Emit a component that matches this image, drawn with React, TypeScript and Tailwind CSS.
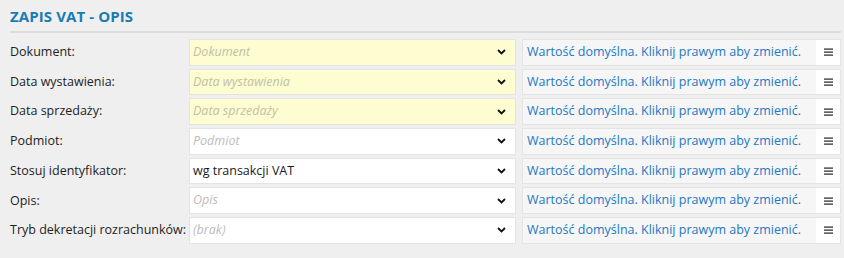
const rows: { label: string; value: string; placeholder: boolean; yellow: boolean }[] = [
  { label: 'Dokument:', value: 'Dokument', placeholder: true, yellow: true },
  { label: 'Data wystawienia:', value: 'Data wystawienia', placeholder: true, yellow: true },
  { label: 'Data sprzedaży:', value: 'Data sprzedaży', placeholder: true, yellow: true },
  { label: 'Podmiot:', value: 'Podmiot', placeholder: true, yellow: false },
  { label: 'Stosuj identyfikator:', value: 'wg transakcji VAT', placeholder: false, yellow: false },
  { label: 'Opis:', value: 'Opis', placeholder: true, yellow: false },
  { label: 'Tryb dekretacji rozrachunków:', value: '(brak)', placeholder: true, yellow: false },
];

function Chevron() {
  return (
    <svg width="9" height="6" viewBox="0 0 9 6" className="shrink-0">
      <path d="M1 1 L4.5 4.5 L8 1" fill="none" stroke="#111" strokeWidth="1.8" />
    </svg>
  );
}

function Burger() {
  return (
    <svg width="9" height="8" viewBox="0 0 9 8">
      <rect x="0" y="0.5" width="9" height="1.2" fill="#222" />
      <rect x="0" y="3.5" width="9" height="1.2" fill="#222" />
      <rect x="0" y="6.5" width="9" height="1.2" fill="#222" />
    </svg>
  );
}

export default function App() {
  return (
    <div
      className="w-[844px] h-[258px] bg-[#efefef] overflow-hidden pl-[10px] pr-[3px]"
      style={{ fontFamily: '"Open Sans", "Noto Sans", sans-serif' }}
    >
      <div className="pt-[5px] h-[31px] text-[15px] font-bold text-[#1a7bb3] tracking-[0.1px]">
        ZAPIS VAT - OPIS
      </div>
      <div className="h-[2px] bg-[#dcdcdc]" />

      <div className="mt-[6px] flex flex-col gap-[3px]">
        {rows.map((r) => (
          <div key={r.label} className="flex items-center h-[26.7px]">
            <div className="w-[179px] text-[12.5px] text-[#1e1e1e] leading-none">{r.label}</div>
            <div
              className={`w-[327px] h-full flex items-center justify-between pl-[3px] pr-[9px] border border-[#e4e4e4] ${
                r.yellow ? 'bg-[#fdfdd1]' : 'bg-white'
              }`}
            >
              <span
                className={`text-[12.5px] ${
                  r.placeholder ? 'italic text-[#bcbcbc]' : 'text-[#1a1a1a]'
                } ${r.yellow ? 'text-[#c2bfa6]' : ''}`}
              >
                {r.value}
              </span>
              <Chevron />
            </div>
            <div className="ml-[6px] w-[319px] h-full flex border border-[#e4e4e4] bg-white">
              <div className="flex-1 bg-[#f6f6f6] flex items-center pl-[4px] text-[12.5px] text-[#2378c4]">
                Wartość domyślna. Kliknij prawym aby zmienić.
              </div>
              <div className="w-[24px] flex items-center justify-center">
                <Burger />
              </div>
            </div>
          </div>
        ))}
      </div>
    </div>
  );
}
